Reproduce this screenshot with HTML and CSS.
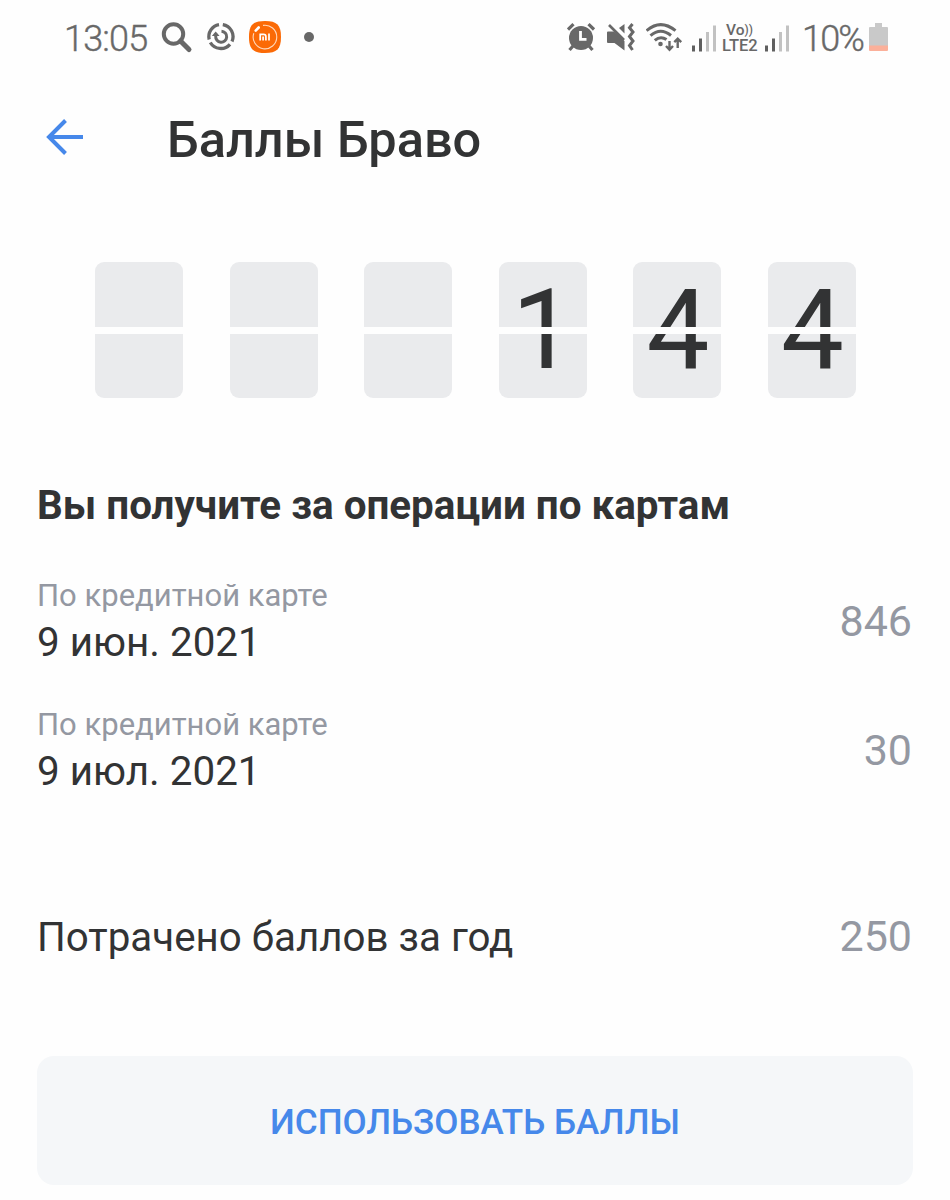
FILE: index.html
```html
<!DOCTYPE html>
<html lang="ru">
<head>
  <meta charset="UTF-8">
  <meta name="viewport" content="width=device-width, initial-scale=1.0">
  <title>Баллы Браво</title>
  <link rel="stylesheet" href="styles.css">
</head>
<body>

  <div class="status-bar">
    <div class="status-left">
      <span class="clock">13:05</span>
      <svg class="icon-search" width="32" height="32" viewBox="0 0 32 32" fill="none" stroke="#686868">
        <circle cx="12.5" cy="12" r="9.7" stroke-width="4"/>
        <path d="M19.5 19L28 27.5" stroke-width="5" stroke-linecap="round"/>
      </svg>
      <svg class="icon-sync" width="30" height="30" viewBox="0 0 30 30" fill="none" stroke="#686868" stroke-width="3.3">
        <path d="M16.8 2.6A12.2 12.2 0 0 1 26 19.5"/>
        <path d="M24 22.3A12.2 12.2 0 0 1 4.3 20.5"/>
        <path d="M3.2 17.5A12.2 12.2 0 0 1 13 2.6"/>
        <path d="M9.7 11.5V14.2A5.5 5.5 0 1 0 15.5 9.2" stroke-width="3"/>
        <path d="M5.8 14L9.7 9.4L13.6 14Z" fill="#686868" stroke="none"/>
      </svg>
      <svg class="icon-mi" width="32" height="32" viewBox="0 0 32 32">
        <path d="M16 0C28 0 32 4 32 16S28 32 16 32S0 28 0 16S4 0 16 0Z" fill="#fb6a06"/>
        <path d="M14 4.4A11.8 11.8 0 1 1 4.8 12.2" fill="none" stroke="#ffd9bd" stroke-width="1.1"/>
        <path d="M6.7 9.6L9.7 6.5" stroke="#fff" stroke-width="2.6" stroke-linecap="round"/>
        <path d="M11.2 19.5V13.4H14.6Q16.9 13.4 16.9 15.7V19.5M14.1 15.4V19.5M20 12.6V19.5" fill="none" stroke="#fff" stroke-width="1.7"/>
      </svg>
      <span class="dot"></span>
    </div>

    <div class="status-right">
      <svg class="icon-alarm" width="29" height="29" viewBox="0 0 29 29">
        <circle cx="14" cy="15" r="12" fill="#686868"/>
        <path d="M1 6.5L6.5 1.2M27 6.5L21.5 1.2" stroke="#686868" stroke-width="3.2"/>
        <path d="M6 23L2.5 27M22 23L25.5 27" stroke="#686868" stroke-width="3.2"/>
        <path d="M13.5 8V16.3H19.5" fill="none" stroke="#fff" stroke-width="2.8"/>
      </svg>
      <svg class="icon-mute" width="29" height="29" viewBox="0 0 29 29">
        <path d="M1 8.5H7L17.5 18V27.5L7.5 20H1Q0 20 0 19V9.5Q0 8.5 1 8.5Z" fill="#686868"/>
        <path d="M12 5L17.5 1V10.5Z" fill="#686868"/>
        <path d="M2 2L17 17" stroke="#686868" stroke-width="2.6"/>
        <path d="M25.5 1L22.5 4.7L26 9L22.5 13.5L26 18L22.5 22.5L25.5 27" fill="none" stroke="#686868" stroke-width="3"/>
      </svg>
      <svg class="icon-wifi" width="37" height="29" viewBox="0 0 37 29" fill="none" stroke="#686868" stroke-width="3">
        <path d="M0.5 7.7Q14.5 -4.4 29.5 7.7"/>
        <path d="M4.5 12.7Q14.5 4 25 12.5"/>
        <path d="M8.8 17.4Q14.5 12.4 20.5 16.6"/>
        <circle cx="14.5" cy="21" r="2.3" fill="#686868" stroke="none"/>
        <path d="M23.5 18V26.2M20 23L23.5 26.7L27 23" stroke-width="2.4"/>
        <path d="M31.7 25V16.2M28.3 19.2L31.7 15.7L35.2 19.2" stroke-width="2.4"/>
      </svg>
      <svg class="icon-signal" width="24" height="27" viewBox="0 0 24 27">
        <path d="M1.5 20.5V26.5M8.5 13.5V26.5" stroke="#606060" stroke-width="3"/>
        <path d="M15.5 7V26.5M22.5 0.5V26.5" stroke="#c2c2c2" stroke-width="3"/>
      </svg>
      <div class="volte">
        <span class="volte-vo">Vo<span class="waves">))</span></span>
        <span class="volte-lte">LTE2</span>
      </div>
      <svg class="icon-signal" width="24" height="27" viewBox="0 0 24 27">
        <path d="M1.5 20.5V26.5M8.5 13.5V26.5" stroke="#606060" stroke-width="3"/>
        <path d="M15.5 7V26.5M22.5 0.5V26.5" stroke="#c2c2c2" stroke-width="3"/>
      </svg>
      <span class="percent">10%</span>
      <svg class="icon-battery" width="19" height="28" viewBox="0 0 19 28">
        <path d="M6 0H13V4H18Q19 4 19 5V23H0V5Q0 4 1 4H6Z" fill="#c9c9c9"/>
        <path d="M0 22.5H19V27Q19 28 18 28H1Q0 28 0 27Z" fill="#fbb09a"/>
      </svg>
    </div>
  </div>

  <header class="header">
    <svg class="back" width="37" height="36" viewBox="0 0 37 36" fill="none" stroke="#4688ea" stroke-width="4">
      <path d="M19.5 1.5L3 18L19.5 34.5M3 18H37"/>
    </svg>
    <h1>Баллы Браво</h1>
  </header>

  <main>
    <div class="counter">
      <div class="digit"></div>
      <div class="digit"></div>
      <div class="digit"></div>
      <div class="digit">1</div>
      <div class="digit">4</div>
      <div class="digit">4</div>
    </div>

    <h2>Вы получите за операции по картам</h2>

    <div class="row">
      <div class="info">
        <span class="label">По кредитной карте</span>
        <span class="date">9 июн. 2021</span>
      </div>
      <span class="amount">846</span>
    </div>
    <div class="row">
      <div class="info">
        <span class="label">По кредитной карте</span>
        <span class="date">9 июл. 2021</span>
      </div>
      <span class="amount">30</span>
    </div>

    <div class="row spent">
      <span class="spent-title">Потрачено баллов за год</span>
      <span class="amount">250</span>
    </div>

    <button class="use-btn">ИСПОЛЬЗОВАТЬ БАЛЛЫ</button>
  </main>

</body>
</html>
```
FILE: styles.css
```css
* {
  box-sizing: border-box;
}

body {
  margin: 0;
  height: 1200px;
  overflow: hidden;
  background: #fefefe;
  color: #323334;
  font-family: Roboto, sans-serif;
}

svg {
  display: block;
  flex: none;
}

.status-bar {
  display: flex;
  justify-content: space-between;
  height: 76px;
  padding: 0 62px 0 64px;
  color: #686868;
  white-space: nowrap;
}

.status-left,
.status-right {
  display: flex;
  align-items: center;
}

.clock,
.percent {
  font-size: 36px;
  font-weight: 300;
  padding-top: 2px;
  -webkit-text-stroke: 0.4px #686868;
}

.clock {
  width: 97px;
  letter-spacing: -0.8px;
}

.icon-sync {
  margin-left: 13px;
  margin-bottom: 2px;
}

.icon-mi {
  margin-left: 13px;
  margin-bottom: 2px;
}

.dot {
  width: 10px;
  height: 10px;
  margin-left: 23px;
  margin-bottom: 2px;
  border-radius: 50%;
  background: #686868;
}

.icon-alarm,
.icon-mute,
.icon-wifi,
.icon-battery {
  margin-bottom: 2px;
}

.icon-mute {
  margin-left: 11px;
}

.icon-wifi {
  margin-left: 10px;
}

.icon-signal {
  margin-left: 9px;
}

.volte {
  display: flex;
  flex-direction: column;
  width: 37px;
  margin-left: 6px;
  font-weight: 500;
}

.volte-vo {
  padding-left: 4px;
  font-size: 15.5px;
  line-height: 15px;
}

.waves {
  font-size: 12px;
  vertical-align: 1px;
}

.volte-lte {
  font-size: 16.5px;
  line-height: 16px;
}

.volte + .icon-signal {
  margin-left: 6px;
}

.percent {
  width: 67px;
  margin-left: 13px;
  letter-spacing: -1.8px;
}

.header {
  display: flex;
  align-items: center;
  height: 80px;
  margin-top: 24px;
  padding-left: 46px;
}

.back {
  margin-bottom: 6px;
}

h1 {
  margin: 0 0 0 84px;
  font-size: 50.5px;
  font-weight: 500;
  line-height: 80px;
}

main {
  padding: 82px 37px 0;
}

.counter {
  display: flex;
  justify-content: space-between;
  margin: 0 57px 0 58px;
}

.digit {
  position: relative;
  width: 88px;
  height: 136px;
  padding-left: 1px;
  border-radius: 9px;
  background: #eaebed;
  font-size: 112px;
  line-height: 136px;
  text-align: center;
}

/* the flap gap goes over the digit */
.digit::after {
  content: "";
  position: absolute;
  left: 0;
  top: 65px;
  width: 100%;
  height: 7px;
  background: #fefefe;
}

h2 {
  margin: 78px 0 40px;
  font-size: 40.4px;
  font-weight: 700;
  line-height: 60px;
}

.row {
  display: flex;
  align-items: center;
  justify-content: space-between;
  height: 94px;
  margin-bottom: 35px;
}

.info {
  display: flex;
  flex-direction: column;
}

.label {
  font-size: 31px;
  line-height: 40px;
  color: #9498a2;
}

.date {
  font-size: 40.4px;
  line-height: 54px;
}

.amount {
  font-size: 43px;
  line-height: 50px;
  margin: 0 1px 4px 0;
  color: #9498a2;
}

.spent {
  margin-top: 91px;
  margin-bottom: 72px;
}

.spent .amount {
  margin-bottom: 2px;
}

.spent-title {
  font-size: 40.3px;
}

.use-btn {
  display: block;
  width: 100%;
  height: 129px;
  padding: 3px 0 0;
  border: none;
  border-radius: 17px;
  background: #f5f7f9;
  color: #4688ea;
  font-family: inherit;
  font-size: 35.1px;
  font-weight: 500;
}
```
